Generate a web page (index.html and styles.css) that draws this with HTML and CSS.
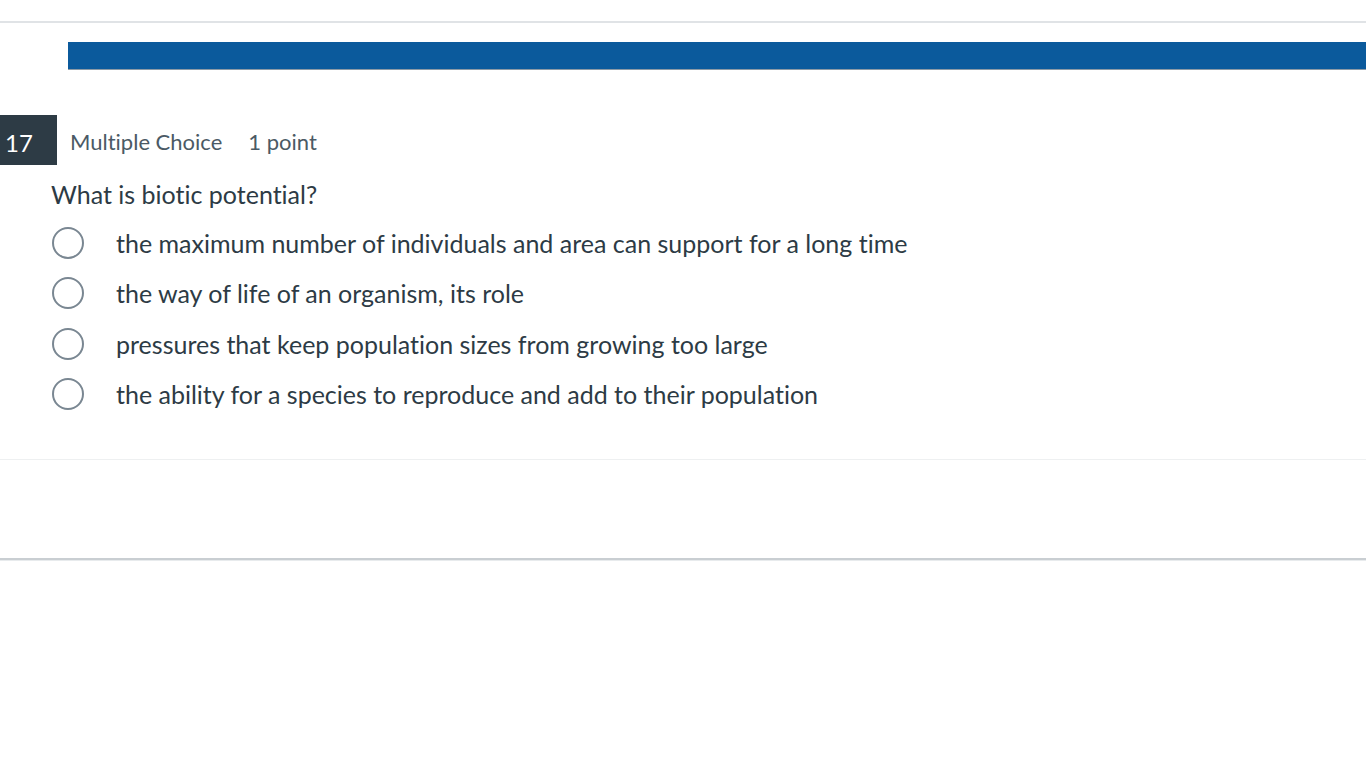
FILE: index.html
```html
<!DOCTYPE html>
<html lang="en">
<head>
    <meta charset="UTF-8">
    <meta name="viewport" content="width=device-width, initial-scale=1.0">
    <title>Quiz - Question 17</title>
    <link rel="stylesheet" href="styles.css">
</head>
<body>
    <div class="page">
        <div class="top-rule"></div>

        <div class="progress-wrap">
            <div class="progress-bar"></div>
        </div>

        <div class="question">
            <div class="question-header">
                <div class="question-number">17</div>
                <span class="question-type">Multiple Choice</span>
                <span class="question-points">1 point</span>
            </div>

            <div class="question-body">
                <p class="question-text">What is biotic potential?</p>

                <ul class="answers">
                    <li class="answer">
                        <span class="radio"></span>
                        <span class="answer-text">the maximum number of individuals and area can support for a long time</span>
                    </li>
                    <li class="answer">
                        <span class="radio"></span>
                        <span class="answer-text">the way of life of an organism, its role</span>
                    </li>
                    <li class="answer">
                        <span class="radio"></span>
                        <span class="answer-text">pressures that keep population sizes from growing too large</span>
                    </li>
                    <li class="answer">
                        <span class="radio"></span>
                        <span class="answer-text">the ability for a species to reproduce and add to their population</span>
                    </li>
                </ul>
            </div>
        </div>

        <div class="question-footer"></div>
        <div class="bottom-rule"></div>
    </div>
</body>
</html>
```

FILE: styles.css
```css
* {
    margin: 0;
    padding: 0;
    box-sizing: border-box;
}

body {
    font-family: Lato, "Open Sans", "Liberation Sans", sans-serif;
    font-variant-ligatures: none;
    background: #fff;
    color: #2d3b45;
}

.page {
    width: 1366px;
    height: 768px;
    padding-top: 21px;
}

.top-rule {
    height: 2px;
    background: #e0e3e6;
}

.progress-wrap {
    padding: 19px 0 0 68px;
}

.progress-bar {
    height: 28px;
    background: #0b5a9c;
    border-bottom: 1px solid #8c9aa6;
}

.question {
    margin-top: 45px;
}

.question-header {
    display: flex;
    align-items: center;
    height: 50px;
    padding-top: 3px;
}

.question-number {
    width: 57px;
    height: 50px;
    margin-top: -3px;
    background: #2d3b45;
    color: #fff;
    font-size: 24px;
    line-height: 56px;
    padding-left: 5px;
}

.question-type,
.question-points {
    font-size: 22px;
    color: #4b5a65;
}

.question-type {
    margin-left: 13px;
}

.question-points {
    margin-left: 26px;
}

.question-body {
    padding-left: 51px;
}

.question-text {
    font-size: 25px;
    line-height: 30px;
    margin-top: 14px;
}

.answers {
    list-style: none;
    margin-top: 9px;
}

.answer {
    display: flex;
    align-items: center;
    height: 50.3px;
}

.radio {
    width: 32px;
    height: 32px;
    border: 2px solid #7a8792;
    border-radius: 50%;
    flex-shrink: 0;
    margin-left: 1px;
}

.answer-text {
    font-size: 25px;
    margin-left: 32px;
}

.question-footer {
    margin-top: 40px;
    border-top: 1px solid #eef0f1;
    height: 99px;
}

.bottom-rule {
    height: 3px;
    background: #c9ced2;
    border-bottom: 1px solid #e8ebed;
}
```
